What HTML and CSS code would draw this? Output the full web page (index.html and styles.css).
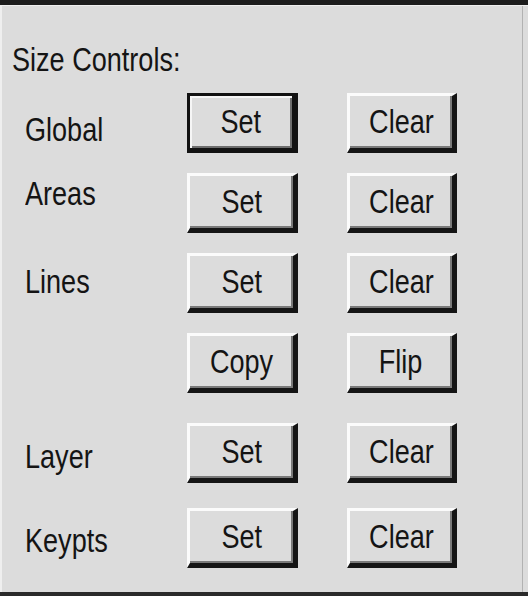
FILE: index.html
```html
<!DOCTYPE html>
<html>
<head>
  <meta charset="utf-8">
  <title>Size Controls</title>
  <link rel="stylesheet" href="styles.css">
</head>
<body>
<div class="window">
  <div class="caption"><span class="txt">Size Controls:</span></div>

  <div class="controls">
    <div class="row">
      <div class="label label_global"><span class="txt">Global</span></div>
      <button class="btn btn_default"><span class="txt">Set</span></button>
      <button class="btn"><span class="txt">Clear</span></button>
    </div>
    <div class="row">
      <div class="label label_areas"><span class="txt">Areas</span></div>
      <button class="btn"><span class="txt">Set</span></button>
      <button class="btn"><span class="txt">Clear</span></button>
    </div>
    <div class="row">
      <div class="label label_lines"><span class="txt">Lines</span></div>
      <button class="btn"><span class="txt">Set</span></button>
      <button class="btn"><span class="txt">Clear</span></button>
    </div>
    <div class="row">
      <div class="label"></div>
      <button class="btn"><span class="txt">Copy</span></button>
      <button class="btn"><span class="txt">Flip</span></button>
    </div>
    <div class="row row_wide">
      <div class="label label_layer"><span class="txt">Layer</span></div>
      <button class="btn"><span class="txt">Set</span></button>
      <button class="btn"><span class="txt">Clear</span></button>
    </div>
    <div class="row row_mid">
      <div class="label label_keypts"><span class="txt">Keypts</span></div>
      <button class="btn"><span class="txt">Set</span></button>
      <button class="btn"><span class="txt">Clear</span></button>
    </div>
  </div>
</div>
</body>
</html>
```

FILE: styles.css
```css
body { margin:0px; padding:0px; background:#dcdcdc; }

.window { height:596px; box-sizing:border-box; background:#dcdcdc;
  border-top:5px solid #1d1d1d; border-bottom:4px solid #2a2a2a;
  box-shadow: inset 2px 1px #efefef, inset -5px 0 #dcdcdc, inset -6px 0 #b2b2b2;
  font-family:"Liberation Sans", Arial, sans-serif;
  font-size:33px; line-height:1; color:#141414; }

/* old dialog font is narrow: squeeze the glyphs */
.txt { display:inline-block; transform:scaleX(0.82); transform-origin:left center; white-space:nowrap; }
.btn .txt { transform-origin:center center; }

.caption { padding:38px 0 0 12px; }

/* rows of buttons */
.controls { display:flex; flex-direction:column; gap:20px; margin-top:17px; padding-left:25px; }
.row { display:grid; grid-template-columns:113px 111px 110px; column-gap:49px; height:60px; }
.row_wide { margin-top:10px; }
.row_mid { margin-top:5px; }

.label { align-self:start; }
.label_global { padding-top:20px; }
.label_areas { padding-top:4px; }
.label_lines { padding-top:12px; }
.label_layer { padding-top:17px; }
.label_keypts { padding-top:16px; }

/* 3d buttons */
.btn { box-sizing:border-box; height:60px; margin:0px; padding:0 0 2px 0;
  font:inherit; color:#141414; background:#dcdcdc; cursor:pointer;
  border-style:solid; border-width:3px 5px 5px 3px;
  border-color:#fbfbfb #151515 #151515 #fbfbfb;
  box-shadow: inset -2px -2px #7a7a7a; }
.btn_default { border-width:3px 6px 5px 3px; border-color:#121212;
  box-shadow: inset 2px 2px #f6f6f6, inset -2px -2px #6e6e6e; }
```
